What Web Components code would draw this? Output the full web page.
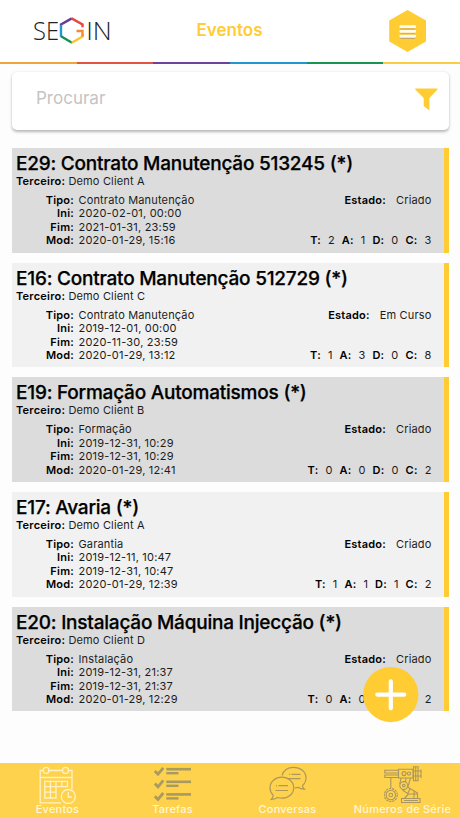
<!DOCTYPE html>
<html lang="pt">
<head>
<meta charset="utf-8">
<title>Eventos</title>
<style>
  html, body { margin: 0; height: 100%; }
  body { background: #fdfdfd; font-family: Inter, "Liberation Sans", sans-serif; color: #000; overflow: hidden; }
</style>
</head>
<body>
<segin-app>
  <app-header slot="header">Eventos</app-header>
  <search-box>Procurar</search-box>
  <event-card shade tipo="Contrato Manutenção" ini="2020-02-01, 00:00" fim="2021-01-31, 23:59" mod="2020-01-29, 15:16" estado="Criado" counts="2,1,0,3">E29: Contrato Manutenção 513245 (*)<span slot="client">Demo Client A</span></event-card>
  <event-card tipo="Contrato Manutenção" ini="2019-12-01, 00:00" fim="2020-11-30, 23:59" mod="2020-01-29, 13:12" estado="Em Curso" counts="1,3,0,8">E16: Contrato Manutenção 512729 (*)<span slot="client">Demo Client C</span></event-card>
  <event-card shade tipo="Formação" ini="2019-12-31, 10:29" fim="2019-12-31, 10:29" mod="2020-01-29, 12:41" estado="Criado" counts="0,0,0,2">E19: Formação Automatismos (*)<span slot="client">Demo Client B</span></event-card>
  <event-card tipo="Garantia" ini="2019-12-11, 10:47" fim="2019-12-31, 10:47" mod="2020-01-29, 12:39" estado="Criado" counts="1,1,1,2">E17: Avaria (*)<span slot="client">Demo Client A</span></event-card>
  <event-card shade tipo="Instalação" ini="2019-12-31, 21:37" fim="2019-12-31, 21:37" mod="2020-01-29, 12:29" estado="Criado" counts="0,0,0,2">E20: Instalação Máquina Injecção (*)<span slot="client">Demo Client D</span></event-card>
  <add-button slot="fab"></add-button>
  <nav-bar slot="footer">
    <nav-tab icon="calendar">Eventos</nav-tab>
    <nav-tab icon="tasks">Tarefas</nav-tab>
    <nav-tab icon="chat">Conversas</nav-tab>
    <nav-tab icon="robot">Números de Série</nav-tab>
  </nav-bar>
</segin-app>

<script>
class BaseElement extends HTMLElement {
  constructor() {
    super();
    this.attachShadow({ mode: "open" });
  }

  connectedCallback() {
    const template = document.createElement("template");
    template.innerHTML = `<style>${this.__css}</style>${this.__html}`;
    this.shadowRoot.replaceChildren(template.content.cloneNode(true));
  }
}

class SeginApp extends BaseElement {
  get __css() {
    return `
      :host { display: flex; flex-direction: column; height: 100vh; position: relative; }
      main { flex: 1; min-height: 0; padding: 8px 11.5px 0 11.5px; overflow: hidden; }
    `;
  }

  get __html() {
    return `
      <slot name="header"></slot>
      <main><slot></slot></main>
      <slot name="fab"></slot>
      <slot name="footer"></slot>
    `;
  }
}

class AppHeader extends BaseElement {
  get __css() {
    return `
      :host { display: block; background: #fff; }
      .bar { display: grid; grid-template-columns: 1fr auto 1fr; align-items: center; height: 61.5px; }
      .logo { margin-left: 28px; display: block; }
      .menu { justify-self: end; margin-right: 33px; display: block; }
      .title { color: #ffcc33; font-size: 17px; font-weight: 600; letter-spacing: 0; padding-right: 1px; margin-top: -1px; }
      .stripe { display: grid; grid-template-columns: repeat(6, 1fr); height: 2.5px; }
      text { font-family: "Open Sans", sans-serif; font-weight: 300; font-size: 26px; fill: #222; }
    `;
  }

  get __html() {
    const colors = ["#f0a53a", "#e25345", "#6c4398", "#2196d0", "#189450", "#f8cd42"];
    return `
      <div class="bar">
        <svg class="logo" width="92" height="50" viewBox="28 6 92 50">
          <text x="33" y="40" textLength="26" lengthAdjust="spacingAndGlyphs">SE</text>
          <g fill="none" stroke-width="2.4">
            <path d="M61 25.2V24.5L71.8 18.4" stroke="#6a3a94"/>
            <path d="M71.6 18.4L82.5 24.5V27.2" stroke="#e34a40"/>
            <path d="M61 24.8V36.8" stroke="#2196d9"/>
            <path d="M61 36.2L72 42.7" stroke="#149050"/>
            <path d="M71.7 42.7L82.5 36.5V34" stroke="#fbc52e"/>
            <path d="M82.5 36.5V31H76.5" stroke="#f18c35"/>
          </g>
          <text x="86.2" y="40" textLength="25.6" lengthAdjust="spacingAndGlyphs">IN</text>
        </svg>
        <div class="title"><slot></slot></div>
        <svg class="menu" width="39" height="44" viewBox="388 9 39 44">
          <path d="M407.5 10L426 20.5V41.5L407.5 52L389.2 41.5V20.5Z" fill="#ffcc33"/>
          <path d="M400.5 29H415M400.5 33.7H415M400.5 38.5H415" stroke="#c5aa64" stroke-width="1"/>
          <path d="M400.7 26.7H414.8M400.7 31.4H414.8M400.7 36.1H414.8" stroke="#fffaf0" stroke-width="2.7" stroke-linecap="round"/>
        </svg>
      </div>
      <div class="stripe">${colors.map((c) => `<i style="background:${c}"></i>`).join("")}</div>
    `;
  }
}

class SearchBox extends BaseElement {
  get __css() {
    return `
      :host {
        display: flex; align-items: center; justify-content: space-between;
        box-sizing: border-box; height: 58px; margin-bottom: 18px; padding: 0 11px 7px 24.5px;
        background: #fff; border-radius: 5px; box-shadow: 0 1.5px 3px rgba(0, 0, 0, 0.28);
        color: #c4c4c4; font-size: 17px;
      }
      svg { display: block; margin-top: 4px; }
    `;
  }

  get __html() {
    return `
      <span><slot></slot></span>
      <svg width="23" height="23" viewBox="0 0 23 23"><path d="M.3.4H22.5V1.5L14.4 10V22.5L8.7 18V10L.3 1.5Z" fill="#ffcc33"/></svg>
    `;
  }
}

class EventCard extends BaseElement {
  get __css() {
    return `
      :host {
        display: block; box-sizing: border-box; height: 104.5px; margin-bottom: 10.2px; padding: 4px 12px 0 4.5px;
        background: #f1f1f1; border-right: 5.5px solid #ffcc33; font-size: 11px; letter-spacing: 0.16px; color: #1c1c1c;
      }
      :host([shade]) { background: #dcdcdc; }
      b { font-weight: 600; color: #000; letter-spacing: 0.22px; }
      h2 { margin: 0; font-size: 19px; line-height: 23px; font-weight: 500; letter-spacing: -0.22px; color: #000; white-space: nowrap; -webkit-text-stroke: 0.25px #000; }
      .client { line-height: 13px; }
      .body { display: flex; justify-content: space-between; margin-top: 6px; line-height: 13.4px; }
      .dates { display: grid; grid-template-columns: 58px auto; column-gap: 4.5px; }
      .dates b { text-align: right; }
      .date { letter-spacing: 0.2px; }
      .side { display: flex; flex-direction: column; justify-content: space-between; align-items: flex-end; }
      .state { display: flex; gap: 10px; }
      .counts { display: flex; gap: 7px; }
    `;
  }

  get __html() {
    const attr = (name) => this.getAttribute(name);
    const counts = attr("counts").split(",");
    return `
      <h2><slot></slot></h2>
      <div class="client"><b>Terceiro:</b> <slot name="client"></slot></div>
      <div class="body">
        <div class="dates">
          <b>Tipo:</b><span>${attr("tipo")}</span>
          <b>Ini:</b><span class="date">${attr("ini")}</span>
          <b>Fim:</b><span class="date">${attr("fim")}</span>
          <b>Mod:</b><span class="date">${attr("mod")}</span>
        </div>
        <div class="side">
          <div class="state"><b>Estado:</b><span>${attr("estado")}</span></div>
          <div class="counts">${["T", "A", "D", "C"].map((k, i) => `<b>${k}:</b><span>${counts[i]}</span>`).join("")}</div>
        </div>
      </div>
    `;
  }
}

class AddButton extends BaseElement {
  get __css() {
    return `
      :host { position: absolute; left: 363px; top: 667px; width: 56px; height: 56px; }
      svg { display: block; }
    `;
  }

  get __html() {
    return `
      <svg width="56" height="56" viewBox="0 0 56 56">
        <circle cx="27.8" cy="27.6" r="27.6" fill="#ffcc33"/>
        <path d="M27.8 14.3V41.3M14.3 27.6H41.3" stroke="#fff" stroke-width="4.2" stroke-linecap="round"/>
      </svg>
    `;
  }
}

class NavBar extends BaseElement {
  get __css() {
    return `
      :host { display: grid; grid-template-columns: repeat(4, 115px); height: 55px; background: #ffd24d; }
    `;
  }

  get __html() {
    return `<slot></slot>`;
  }
}

const ICONS = {
  calendar: `
    <g stroke="#fff2c4" stroke-width="1.3">
      <path d="M5 4.5H1.2V36.8H22M9 4.5H23M29 4.5H33V23M1.2 11.5H33"/>
      <circle cx="7" cy="4.4" r="3"/><circle cx="26.5" cy="4.4" r="3"/>
      <path d="M5.8 15.3H28.5V20.7H5.8ZM5.8 20.7V32H17V15.3M11.4 15.3V32M22.8 15.3V20.7M5.8 26.2H17"/>
      <circle cx="29.3" cy="30.5" r="7"/><path d="M29.3 26V31H33"/>
    </g>`,
  tasks: [0, 12.6, 25.2].map((y) => `
    <g transform="translate(0 ${y})" stroke="#a99a60">
      <path d="M.8 5L4 8.2L9.3 1.8" stroke-width="2.8"/>
      <path d="M12.3 3.2H37" stroke-width="2.6"/><path d="M12.3 7.2H24.5" stroke-width="2.4"/>
    </g>`).join(""),
  chat: `
    <g stroke="#ae995a" stroke-width="1.2">
      <path d="M13 9.5C14.5 4.5 19 1.3 24.5 1.3C31.5 1.3 37 5.8 37 12C37 15.4 35.6 17.8 33.5 19.5C33.6 21.2 34.3 22.3 35.4 23.2C32.5 23.2 30.4 22.3 29 21.3L25.5 22"/>
      <path d="M1 21.7C1 15.7 6.2 11.2 12.8 11.2C19.5 11.2 24.7 15.7 24.7 21.7C24.7 27.8 19.5 32.2 12.8 32.2C11.3 32.2 9.8 32 8.5 31.5C7 32.6 5 33.5 2.3 33.5C3.5 32.3 4.1 31 4.2 29.2C2.2 27.2 1 24.8 1 21.7Z"/>
      <path d="M20 8.4H21M22.5 8.4H31.5M18.5 12.6H31.5M7 19.7H8M9.5 19.7H19M6.5 24.5H19"/>
    </g>`,
  robot: `
    <g stroke="#a99660" stroke-width="1.1">
      <path d="M.8 4.2H14.5V7H.8ZM.8 9H14.5V11.5H.8ZM14.5 3.2H29V12H14.5Z"/>
      <circle cx="20" cy="7.6" r="2"/><circle cx="25" cy="7.6" r="1.6"/>
      <path d="M29.5 .7H34V14.8H29.5ZM29.5 5H37M29.5 10H37M37 3.5V12M31.7 1V15"/>
      <path d="M17 12L15.8 18M26.5 12L24 20.5M22 12L21.5 16"/>
      <circle cx="19.8" cy="19.6" r="4"/><circle cx="19.8" cy="19.6" r="1.3"/>
      <path d="M23.5 21L33.5 27V32.5H20.3L24.5 28L18.5 24M25 28H33.5M17.5 32.5H36V36.5H17.5ZM26 23L24 27M30 25V32M20 34.5H34"/>
      <circle cx="6.8" cy="29" r="6.5" stroke-dasharray="2.3 .8"/><circle cx="6.8" cy="29" r="4.7"/><circle cx="6.8" cy="29" r="1.8"/>
      <path d="M6.8 11.5V22"/>
    </g>`,
};

class NavTab extends BaseElement {
  get __css() {
    return `
      :host { display: flex; flex-direction: column; align-items: center; padding-top: 3px; color: #fff6d8; font-size: 11px; font-weight: 500; letter-spacing: 0.2px; white-space: nowrap; }
      svg { display: block; }
      span { line-height: 13px; margin-top: -1px; }
    `;
  }

  get __html() {
    return `
      <svg width="38" height="38" viewBox="0 0 38 38" fill="none">${ICONS[this.getAttribute("icon")]}</svg>
      <span><slot></slot></span>
    `;
  }
}

customElements.define("segin-app", SeginApp);
customElements.define("app-header", AppHeader);
customElements.define("search-box", SearchBox);
customElements.define("event-card", EventCard);
customElements.define("add-button", AddButton);
customElements.define("nav-bar", NavBar);
customElements.define("nav-tab", NavTab);
</script>
</body>
</html>
